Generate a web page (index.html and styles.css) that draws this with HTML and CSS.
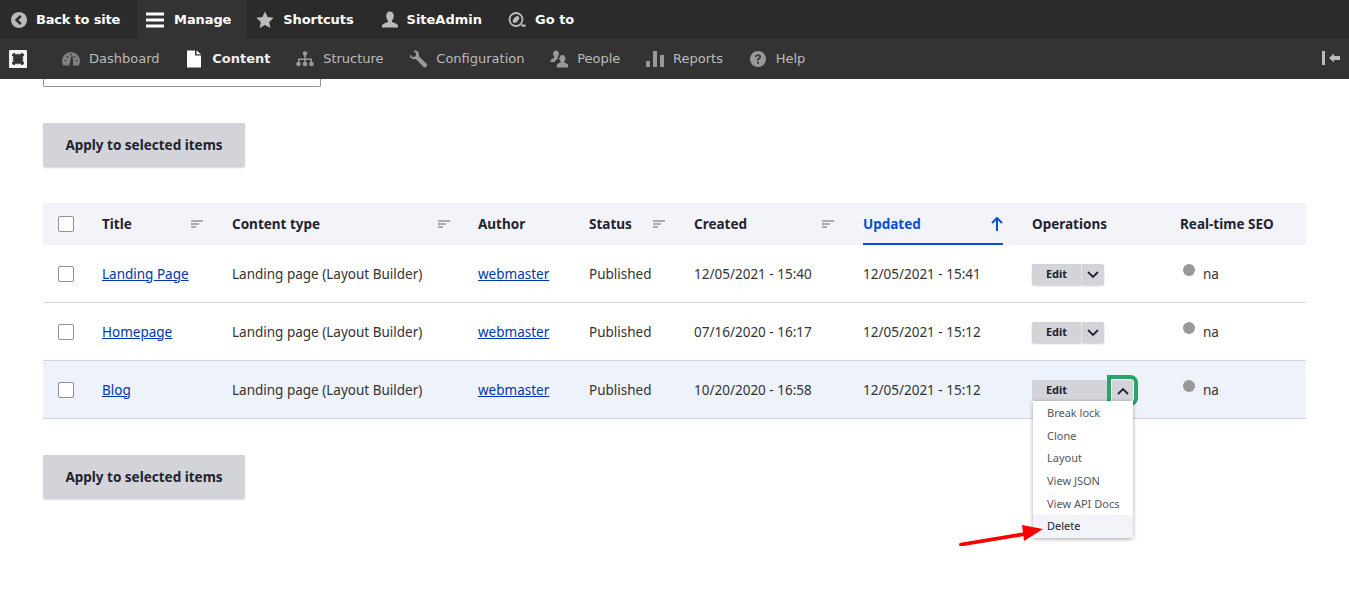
FILE: index.html
```html
<!DOCTYPE html>
<html lang="en">
<head>
    <meta charset="UTF-8">
    <title>Content</title>
    <link rel="stylesheet" href="styles.css">
</head>
<body>
<div class="toolbar">
    <div class="bar-top">
        <a class="top-item first">
            <svg class="ico" viewBox="0 0 18 18"><circle cx="9" cy="9" r="8" fill="#bbb"/><path d="M10.800 4.800 6.600 9l4.200 4.200" fill="none" stroke="#2b2b2b" stroke-width="2.600"/></svg>
            Back to site
        </a>
        <a class="top-item active">
            <svg class="ico" viewBox="0 0 18 18"><path d="M0 1.500h18v3H0zM0 7.500h18v3H0zM0 13.500h18v3H0z" fill="#fff"/></svg>
            Manage
        </a>
        <a class="top-item shortcuts">
            <svg class="ico" viewBox="0 0 18 18"><path d="M9 .5l2.600 5.600 6.100.7-4.500 4.100 1.200 6L9 14l-5.400 2.900 1.200-6L.3 6.800l6.100-.7z" fill="#bbb"/></svg>
            Shortcuts
        </a>
        <a class="top-item user">
            <svg class="ico" viewBox="0 0 18 18"><path d="M9 .5c2.400 0 3.800 2 3.800 4.400 0 1.900-.8 3.500-1.800 4.600v1.600c2.800.8 5.500 2 6 3.400v2H1v-2c.5-1.400 3.200-2.600 6-3.400V9.500C6 8.400 5.200 6.800 5.200 4.900 5.200 2.500 6.600.5 9 .5z" fill="#bbb"/></svg>
            SiteAdmin
        </a>
        <a class="top-item">
            <svg class="ico" viewBox="0 0 18 18"><circle cx="8" cy="8.500" r="6.500" fill="none" stroke="#bbb" stroke-width="1.800"/><ellipse cx="8" cy="8.500" rx="2.300" ry="4" transform="rotate(40 8 8.500)" fill="#bbb"/><path d="M12.500 13.500h5v2.200h-3.500z" fill="#bbb"/></svg>
            Go to
        </a>
    </div>
    <div class="bar-menu">
        <svg class="full-ico" viewBox="0 0 18 18"><rect width="18" height="18" rx="1" fill="#f4f4f4"/><rect x="3" y="3" width="12" height="12" rx="2.500" fill="#333"/><path d="M6 3h6v1.200H6zM6 13.800h6V15H6zM3 6h1.200v6H3zM13.800 6H15v6h-1.200z" fill="#ddd"/></svg>
        <nav class="menu">
            <a class="menu-item">
                <svg class="ico" viewBox="0 0 18 18"><path d="M9 2a9 9 0 0 0-9 9c0 1.800.4 3.300 1.200 4.600h15.600c.8-1.300 1.200-2.800 1.200-4.600a9 9 0 0 0-9-9z" fill="#808080"/><path d="M8 15.500 10 6.500l.6 9zM2.500 10.500h2M4.800 6l1.300 1.300M9 3.500v2M13.200 6l-1.300 1.300M15.500 10.500h-2" fill="#333" stroke="#333" stroke-width="1.200"/></svg>
                Dashboard
            </a>
            <a class="menu-item current">
                <svg class="ico" viewBox="0 0 18 18"><path d="M2 .5h8v5h6v12H2zM11.500.5 16 4.200h-4.500z" fill="#fff"/></svg>
                Content
            </a>
            <a class="menu-item">
                <svg class="ico" viewBox="0 0 18 18"><g fill="#999"><circle cx="9" cy="3.500" r="2.200"/><circle cx="2.500" cy="14" r="2.300"/><circle cx="9" cy="14" r="2.300"/><circle cx="15.500" cy="14" r="2.300"/><path d="M8.200 4h1.600v4.500H16V13h-1.500V10H9.800v3H8.200v-3H3.500v3H2V8.500h6.200z"/></g></svg>
                Structure
            </a>
            <a class="menu-item">
                <svg class="ico" viewBox="0 0 18 18"><path d="M1 4.500 3.800 7.200 6.500 6.300l.8-2.700L4.500.9C7-.2 9.800 1.300 10 4c0 .8-.1 1.400-.3 2l7.800 7.700c.9 1 .6 2.200-.1 3-.8.800-2 1-3 .1L6.700 9c-.6.200-1.200.3-1.800.2C2 9 .4 7.100 1 4.500z" fill="#999"/></svg>
                Configuration
            </a>
            <a class="menu-item">
                <svg class="ico" viewBox="0 0 18 18"><path d="M6 .5c1.800 0 2.900 1.400 2.900 3.200 0 1.300-.5 2.400-1.200 3.200v1.200l.7.300C6.500 9.300 5 10.400 4.500 12H.5v-1.500c.4-1.100 2.200-1.900 3.800-2.400V6.900c-.7-.8-1.200-1.900-1.200-3.200C3.100 1.900 4.200.5 6 .5z" fill="#999"/><path d="M12.500 5c1.800 0 2.900 1.400 2.900 3.200 0 1.300-.5 2.400-1.200 3.200v1.200c1.600.5 3.400 1.300 3.800 2.400v2.500H6.800V15c.4-1.100 2.200-1.900 3.800-2.400v-1.200c-.7-.8-1.200-1.900-1.200-3.200C9.400 6.400 10.700 5 12.500 5z" fill="#999"/></svg>
                People
            </a>
            <a class="menu-item">
                <svg class="ico" viewBox="0 0 18 18"><path d="M0 11h4v6H0zM7 1h4v16H7zM14 5h4v12h-4z" fill="#999"/></svg>
                Reports
            </a>
            <a class="menu-item">
                <svg class="ico" viewBox="0 0 18 18"><circle cx="9" cy="9" r="8" fill="#999"/><path d="M6 7c0-1.800 1.300-2.800 3.100-2.800s3 1 3 2.500c0 2.200-2.300 2.100-2.300 3.800H8c0-2.500 2.100-2.500 2.100-3.700 0-.6-.4-1-1.100-1-.8 0-1.200.5-1.200 1.200zM8 11.800h1.900v1.900H8z" fill="#333"/></svg>
                Help
            </a>
        </nav>
        <svg class="collapse-ico" viewBox="0 0 18 14"><path d="M0 0h3v14H0zM7 7l5-4.500V5h6v4h-6v2.500z" fill="#bbb"/></svg>
    </div>
</div>

<main class="page">
    <div class="select-stub"></div>
    <div><button class="apply-btn">Apply to selected items</button></div>

    <table class="content-table">
        <colgroup>
            <col class="c-check"><col class="c-title"><col class="c-type"><col class="c-author"><col class="c-status"><col class="c-created"><col class="c-updated"><col class="c-ops"><col class="c-seo">
        </colgroup>
        <thead>
            <tr>
                <th class="check-cell"><input type="checkbox"></th>
                <th><div class="sort-head">Title <svg class="sort-ico" viewBox="0 0 12 8"><path d="M0 0h12v2H0zM0 3h8v2H0zM0 6h5v2H0z" fill="#a9acb2"/></svg></div></th>
                <th><div class="sort-head type-head">Content type <svg class="sort-ico" viewBox="0 0 12 8"><path d="M0 0h12v2H0zM0 3h8v2H0zM0 6h5v2H0z" fill="#a9acb2"/></svg></div></th>
                <th>Author</th>
                <th><div class="sort-head">Status <svg class="sort-ico" viewBox="0 0 12 8"><path d="M0 0h12v2H0zM0 3h8v2H0zM0 6h5v2H0z" fill="#a9acb2"/></svg></div></th>
                <th><div class="sort-head">Created <svg class="sort-ico" viewBox="0 0 12 8"><path d="M0 0h12v2H0zM0 3h8v2H0zM0 6h5v2H0z" fill="#a9acb2"/></svg></div></th>
                <th><div class="sort-head sorted">Updated <svg class="arrow-ico" viewBox="0 0 12 14"><path d="M6 1v13M1 6l5-5 5 5" fill="none" stroke="#0550d8" stroke-width="2"/></svg></div></th>
                <th>Operations</th>
                <th>Real-time SEO</th>
            </tr>
        </thead>
        <tbody>
            <tr>
                <td class="check-cell"><input type="checkbox"></td>
                <td><a class="link">Landing Page</a></td>
                <td>Landing page (Layout Builder)</td>
                <td><a class="link">webmaster</a></td>
                <td>Published</td>
                <td>12/05/2021 - 15:40</td>
                <td>12/05/2021 - 15:41</td>
                <td>
                    <div class="dropbutton">
                        <span class="drop-edit">Edit</span>
                        <span class="drop-toggle"><svg class="chev" viewBox="0 0 12 8"><path d="M1 1l5 5 5-5" fill="none" stroke="#222330" stroke-width="1.800"/></svg></span>
                    </div>
                </td>
                <td><span class="dot"></span>na</td>
            </tr>
            <tr>
                <td class="check-cell"><input type="checkbox"></td>
                <td><a class="link">Homepage</a></td>
                <td>Landing page (Layout Builder)</td>
                <td><a class="link">webmaster</a></td>
                <td>Published</td>
                <td>07/16/2020 - 16:17</td>
                <td>12/05/2021 - 15:12</td>
                <td>
                    <div class="dropbutton">
                        <span class="drop-edit">Edit</span>
                        <span class="drop-toggle"><svg class="chev" viewBox="0 0 12 8"><path d="M1 1l5 5 5-5" fill="none" stroke="#222330" stroke-width="1.800"/></svg></span>
                    </div>
                </td>
                <td><span class="dot"></span>na</td>
            </tr>
            <tr class="row-open">
                <td class="check-cell"><input type="checkbox"></td>
                <td><a class="link">Blog</a></td>
                <td>Landing page (Layout Builder)</td>
                <td><a class="link">webmaster</a></td>
                <td>Published</td>
                <td>10/20/2020 - 16:58</td>
                <td>12/05/2021 - 15:12</td>
                <td>
                    <div class="dropbutton open">
                        <span class="drop-edit">Edit</span>
                        <span class="drop-toggle"><svg class="chev" viewBox="0 0 12 8"><path d="M1 7l5-5 5 5" fill="none" stroke="#222330" stroke-width="1.800"/></svg></span>
                        <ul class="drop-list">
                            <li>Break lock</li>
                            <li>Clone</li>
                            <li>Layout</li>
                            <li>View JSON</li>
                            <li>View API Docs</li>
                            <li class="hover">Delete</li>
                        </ul>
                    </div>
                </td>
                <td><span class="dot"></span>na</td>
            </tr>
        </tbody>
    </table>

    <div><button class="apply-btn">Apply to selected items</button></div>

    <svg class="red-arrow" viewBox="0 0 84 22"><path d="M2 20.500 66 10" fill="none" stroke="#f00" stroke-width="3.800" stroke-linecap="round"/><path d="M84 5 63 1l2 16z" fill="#f00"/></svg>
</main>
</body>
</html>
```

FILE: styles.css
```css
* {
    margin: 0;
    padding: 0;
    box-sizing: border-box;
}

ul {
    list-style: none;
}

body {
    font-family: "Noto Sans", "Open Sans", sans-serif;
    font-size: 13.5px;
    color: #333;
    background: #fff;
}

/* toolbar */
.toolbar {
    font-family: "DejaVu Sans", Verdana, sans-serif;
    font-size: 13px;
}

.bar-top {
    display: flex;
    height: 39px;
    background: #2b2b2b;
}

.top-item {
    display: flex;
    align-items: center;
    gap: 9px;
    padding: 0 18px 0 9px;
    color: #fff;
    font-weight: bold;
}

.top-item.first {
    gap: 8px;
    padding: 0 17px 0 10px;
    letter-spacing: -0.2px;
}

.top-item.active {
    gap: 10px;
    background: #333;
    padding-right: 16px;
    letter-spacing: -0.1px;
}

.top-item.shortcuts {
    letter-spacing: -0.1px;
}

.top-item.user {
    gap: 8px;
    padding-right: 17px;
}

.ico {
    width: 18px;
    height: 18px;
    flex: none;
}

.bar-menu {
    display: flex;
    align-items: center;
    height: 40px;
    padding: 0 9px 2px;
    background: #333;
}

.full-ico {
    width: 18px;
    height: 18px;
    margin: 2px 35px 0 0;
}

.menu {
    display: flex;
    gap: 25.7px;
    flex: 1;
}

.menu-item {
    display: flex;
    align-items: center;
    gap: 9px;
    color: #bbb;
}

.menu-item .ico {
    margin-top: 2px;
}

.menu-item.current {
    color: #eee;
    font-weight: bold;
}

.collapse-ico {
    width: 18px;
    height: 14px;
}

/* page */
.page {
    position: relative;
    display: flex;
    flex-direction: column;
    gap: 36px;
    min-height: 521px;
    padding: 0 43px;
}

.select-stub {
    width: 278px;
    height: 8px;
    border: 1px solid #8e929c;
    border-top: 0;
    border-radius: 0 0 2px 2px;
}

.apply-btn {
    display: block;
    width: 202px;
    height: 44px;
    border: 0;
    border-radius: 2px;
    background: #d3d4d9;
    box-shadow: 0 1px 2px rgba(0, 0, 0, 0.15);
    color: #222330;
    font-family: inherit;
    font-size: 13.5px;
    font-weight: bold;
}

/* table */
.content-table {
    width: 1263px;
    table-layout: fixed;
    border-collapse: separate;
    border-spacing: 0;
}

.c-check { width: 59px; }
.c-title { width: 130px; }
.c-type { width: 246px; }
.c-author { width: 111px; }
.c-status { width: 105px; }
.c-created { width: 169px; }
.c-updated { width: 169px; }
.c-ops { width: 148px; }
.c-seo { width: 126px; }

.content-table th {
    height: 42px;
    background: #f3f4f9;
    color: #222330;
    font-weight: bold;
    text-align: left;
}

.content-table td {
    height: 58px;
    border-bottom: 1px solid #d3d4d9;
    color: #333;
}

.content-table .check-cell {
    padding-left: 15px;
}

input[type="checkbox"] {
    display: block;
    appearance: none;
    width: 16px;
    height: 16px;
    border: 1px solid #8e929c;
    border-radius: 2px;
    background: #fff;
}

.sort-head {
    display: flex;
    align-items: center;
    justify-content: space-between;
    height: 42px;
    margin-right: 29px;
}

.sort-head.type-head {
    margin-right: 28px;
}

.sort-head.sorted {
    padding-top: 2px;
    color: #0550d8;
    border-bottom: 2px solid #0550d8;
}

.sort-ico {
    width: 12px;
    height: 8px;
}

.arrow-ico {
    width: 12px;
    height: 14px;
}

.link {
    color: #0036b1;
    text-decoration: underline;
}

.row-open td {
    background: #edf2fb;
}

.dot {
    display: inline-block;
    width: 12px;
    height: 12px;
    margin: 0 8px 3px 3px;
    border-radius: 50%;
    background: #999;
}

/* dropbutton */
.dropbutton {
    position: relative;
    display: flex;
    width: 72px;
    height: 21px;
    margin-top: 2px;
    font-size: 11px;
    font-weight: bold;
    color: #222330;
}

.drop-edit {
    width: 49px;
    line-height: 20px;
    text-align: center;
    background: #d3d4d9;
    border-radius: 2px 0 0 2px;
    box-shadow: 0 1px 2px rgba(0, 0, 0, 0.2);
}

.drop-toggle {
    display: flex;
    align-items: center;
    justify-content: center;
    width: 22px;
    margin-left: 1px;
    background: #d3d4d9;
    border-radius: 0 2px 2px 0;
    box-shadow: 0 1px 2px rgba(0, 0, 0, 0.2);
}

.chev {
    width: 12px;
    height: 8px;
}

.dropbutton.open {
    width: 101px;
}

.dropbutton.open .drop-edit {
    width: 75px;
    padding-right: 26px;
    box-shadow: none;
}

.dropbutton.open .drop-toggle {
    position: relative;
    width: 21px;
    margin-left: 5px;
    box-shadow: 0 0 0 1px #fff, 0 0 0 5px #26a769;
    border-radius: 0 3px 3px 0;
}

.drop-list {
    position: absolute;
    left: 1px;
    top: 21px;
    width: 100px;
    padding-top: 1px;
    background: #fff;
    border-radius: 0 0 2px 2px;
    box-shadow: 0 1px 4px rgba(0, 0, 0, 0.35);
    font-size: 11px;
    font-weight: normal;
    color: #55565b;
}

.drop-list li {
    height: 22.67px;
    line-height: 22.67px;
    padding-left: 14px;
}

.drop-list li.hover {
    background: #f3f4f9;
    color: #222330;
}

/* annotation drawn on the screenshot */
.red-arrow {
    position: absolute;
    left: 959px;
    top: 445px;
    width: 84px;
    height: 22px;
}
```
